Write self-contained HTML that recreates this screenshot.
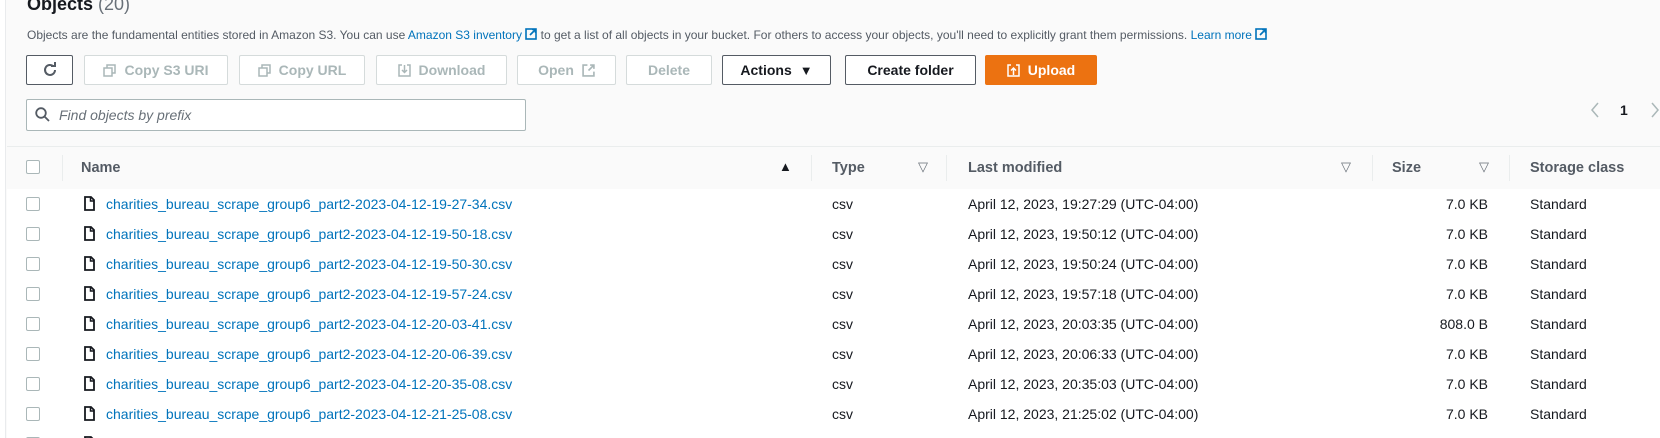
<!DOCTYPE html>
<html><head><meta charset="utf-8"><style>
*{box-sizing:border-box;margin:0;padding:0}
html,body{width:1660px;height:438px;overflow:hidden}
body{background:#fafafa;font-family:"Liberation Sans",sans-serif;color:#16191f;position:relative}
.a{position:absolute;white-space:nowrap}
.lb{position:absolute;left:0;top:0;width:6px;height:438px;background:#fff;border-right:1px solid #e9ebed}
.btn{position:absolute;top:55px;height:30px;border:1px solid #d5dbdb;border-radius:2px;background:#fff;color:#aab7b8;font-weight:bold;font-size:14px;display:flex;align-items:center;justify-content:center;gap:8px}
.btn.on{border-color:#545b64;color:#545b64}
.up{background:#ec7211;border-color:#ec7211;color:#fff}
a{color:#0073bb;text-decoration:none}
.hl{position:absolute;left:7px;right:0;height:1px;background:#eaeded}
.cb{position:absolute;left:26px;width:14px;height:14px;border:1px solid #aab7b8;border-radius:2px;background:#fff}
.t{font-size:14px}
.sep{position:absolute;top:155px;width:1px;height:26px;background:#eaeded}
.h{font-weight:bold;font-size:14.5px;color:#545b64;top:160px}
.tri{font-size:13px;color:#687078;top:159px}
</style></head><body>
<div class="lb"></div>
<div class="a" style="left:27px;top:-6px;font-size:18px;font-weight:bold">Objects <span style="font-weight:normal;color:#687078">(20)</span></div>
<div class="a" style="left:27px;top:28px;font-size:12px;color:#545b64">Objects are the fundamental entities stored in Amazon S3. You can use <a>Amazon S3 inventory <svg width="12" height="12" viewBox="0 0 12 12" style="vertical-align:-1px"><rect x="1" y="1" width="10" height="10" fill="none" stroke="#0073bb" stroke-width="1.6"/><path d="M5 7L10 2M7 1.5h3.5V5" stroke="#0073bb" stroke-width="1.6" fill="none"/></svg></a> to get a list of all objects in your bucket. For others to access your objects, you'll need to explicitly grant them permissions. <a>Learn more <svg width="12" height="12" viewBox="0 0 12 12" style="vertical-align:-1px"><rect x="1" y="1" width="10" height="10" fill="none" stroke="#0073bb" stroke-width="1.6"/><path d="M5 7L10 2M7 1.5h3.5V5" stroke="#0073bb" stroke-width="1.6" fill="none"/></svg></a></div>

<div class="btn on" style="left:26px;width:47px"><svg width="16" height="16" viewBox="0 0 16 16"><path d="M13 8a5 5 0 1 1-1.6-3.7" fill="none" stroke="#545b64" stroke-width="2"/><path d="M9 4h4V0" fill="none" stroke="#545b64" stroke-width="2"/></svg></div>
<div class="btn" style="left:84px;width:144px"><svg width="13" height="13" viewBox="0 0 13 13"><rect x="1" y="4" width="8" height="8" fill="none" stroke="#aab7b8" stroke-width="1.5"/><path d="M4 4V1h8v8H9" fill="none" stroke="#aab7b8" stroke-width="1.5"/></svg>Copy S3 URI</div>
<div class="btn" style="left:239px;width:126px"><svg width="13" height="13" viewBox="0 0 13 13"><rect x="1" y="4" width="8" height="8" fill="none" stroke="#aab7b8" stroke-width="1.5"/><path d="M4 4V1h8v8H9" fill="none" stroke="#aab7b8" stroke-width="1.5"/></svg>Copy URL</div>
<div class="btn" style="left:376px;width:131px"><svg width="13" height="13" viewBox="0 0 13 13"><path d="M4 1H1v11h11V1H9M6.5 1v7M4 6l2.5 2.5L9 6" fill="none" stroke="#aab7b8" stroke-width="1.5"/></svg>Download</div>
<div class="btn" style="left:517px;width:99px">Open <svg width="13" height="13" viewBox="0 0 12 12"><path d="M5 1H1v10h10V7M6 6l5-5M7.5 1H11v3.5" fill="none" stroke="#aab7b8" stroke-width="1.5"/></svg></div>
<div class="btn" style="left:626px;width:86px">Delete</div>
<div class="btn on" style="left:722px;width:109px;color:#16191f">Actions <span style="font-size:13px">▼</span></div>
<div class="btn on" style="left:845px;width:131px;color:#16191f">Create folder</div>
<div class="btn up" style="left:985px;width:112px"><svg width="13" height="13" viewBox="0 0 13 13"><path d="M4 1H1v11h11V1H9M6.5 11V4M4 6.5L6.5 4L9 6.5" fill="none" stroke="#fff" stroke-width="1.5"/></svg>Upload</div>

<div class="a" style="left:26px;top:99px;width:500px;height:32px;border:1px solid #aab7b8;border-radius:2px;background:#fff"></div>
<svg class="a" style="left:35px;top:107px" width="15" height="15" viewBox="0 0 15 15"><circle cx="6" cy="6" r="4.8" fill="none" stroke="#545b64" stroke-width="1.8"/><path d="M9.5 9.5L14 14" stroke="#545b64" stroke-width="1.8"/></svg>
<div class="a" style="left:59px;top:107px;font-size:14px;font-style:italic;color:#687078">Find objects by prefix</div>

<svg class="a" style="left:1590px;top:101px" width="10" height="18" viewBox="0 0 10 18"><path d="M8 2L2 9l6 7" fill="none" stroke="#aab7b8" stroke-width="1.5"/></svg>
<div class="a" style="left:1620px;top:102px;font-size:14px;font-weight:bold">1</div>
<svg class="a" style="left:1650px;top:101px" width="10" height="18" viewBox="0 0 10 18"><path d="M2 2l6 7-6 7" fill="none" stroke="#aab7b8" stroke-width="1.5"/></svg>

<div class="a" style="left:7px;top:146px;right:0;height:43px;background:#fafafa"></div>
<div class="hl" style="top:146px"></div>
<div class="cb" style="top:160px"></div>
<div class="sep" style="left:62px"></div><div class="sep" style="left:811px"></div><div class="sep" style="left:946px"></div><div class="sep" style="left:1372px"></div><div class="sep" style="left:1509px"></div>
<div class="a h" style="left:81px">Name</div>
<div class="a" style="left:779px;top:159px;font-size:13px">▲</div>
<div class="a h" style="left:832px">Type</div><div class="a tri" style="left:918px">▽</div>
<div class="a h" style="left:968px">Last modified</div><div class="a tri" style="left:1341px">▽</div>
<div class="a h" style="left:1392px">Size</div><div class="a tri" style="left:1479px">▽</div>
<div class="a h" style="left:1530px">Storage class</div>
<div class="hl" style="top:189px"></div>

<div id="rows"></div>
<script>
var d=[["19-27-34","19:27:29","7.0 KB"],["19-50-18","19:50:12","7.0 KB"],["19-50-30","19:50:24","7.0 KB"],["19-57-24","19:57:18","7.0 KB"],["20-03-41","20:03:35","808.0 B"],["20-06-39","20:06:33","7.0 KB"],["20-35-08","20:35:03","7.0 KB"],["21-25-08","21:25:02","7.0 KB"],["","",""]];
var h="";d.forEach(function(r,i){var y=189+i*30;
h+='<div class="a" style="left:7px;right:0;top:'+y+'px;height:30px;background:#fff"></div><div class="hl" style="top:'+(y+30)+'px"></div><div class="cb" style="top:'+(y+8)+'px"></div>';
h+='<svg class="a" style="left:84px;top:'+(y+7)+'px" width="11" height="15" viewBox="0 0 11 15"><path d="M1 1h6l3 3v10H1z" fill="none" stroke="#16191f" stroke-width="1.8"/><path d="M6.5 1v4h3.5" fill="none" stroke="#16191f" stroke-width="1.5"/></svg>';
if(r[0]){h+='<div class="a t" style="left:106px;top:'+(y+7)+'px"><a>charities_bureau_scrape_group6_part2-2023-04-12-'+r[0]+'.csv</a></div>';
h+='<div class="a t" style="left:832px;top:'+(y+7)+'px">csv</div><div class="a t" style="left:968px;top:'+(y+7)+'px">April 12, 2023, '+r[1]+' (UTC-04:00)</div>';
h+='<div class="a t" style="right:172px;top:'+(y+7)+'px">'+r[2]+'</div><div class="a t" style="left:1530px;top:'+(y+7)+'px">Standard</div>';}
});document.getElementById("rows").innerHTML=h;
</script>
</body></html>
